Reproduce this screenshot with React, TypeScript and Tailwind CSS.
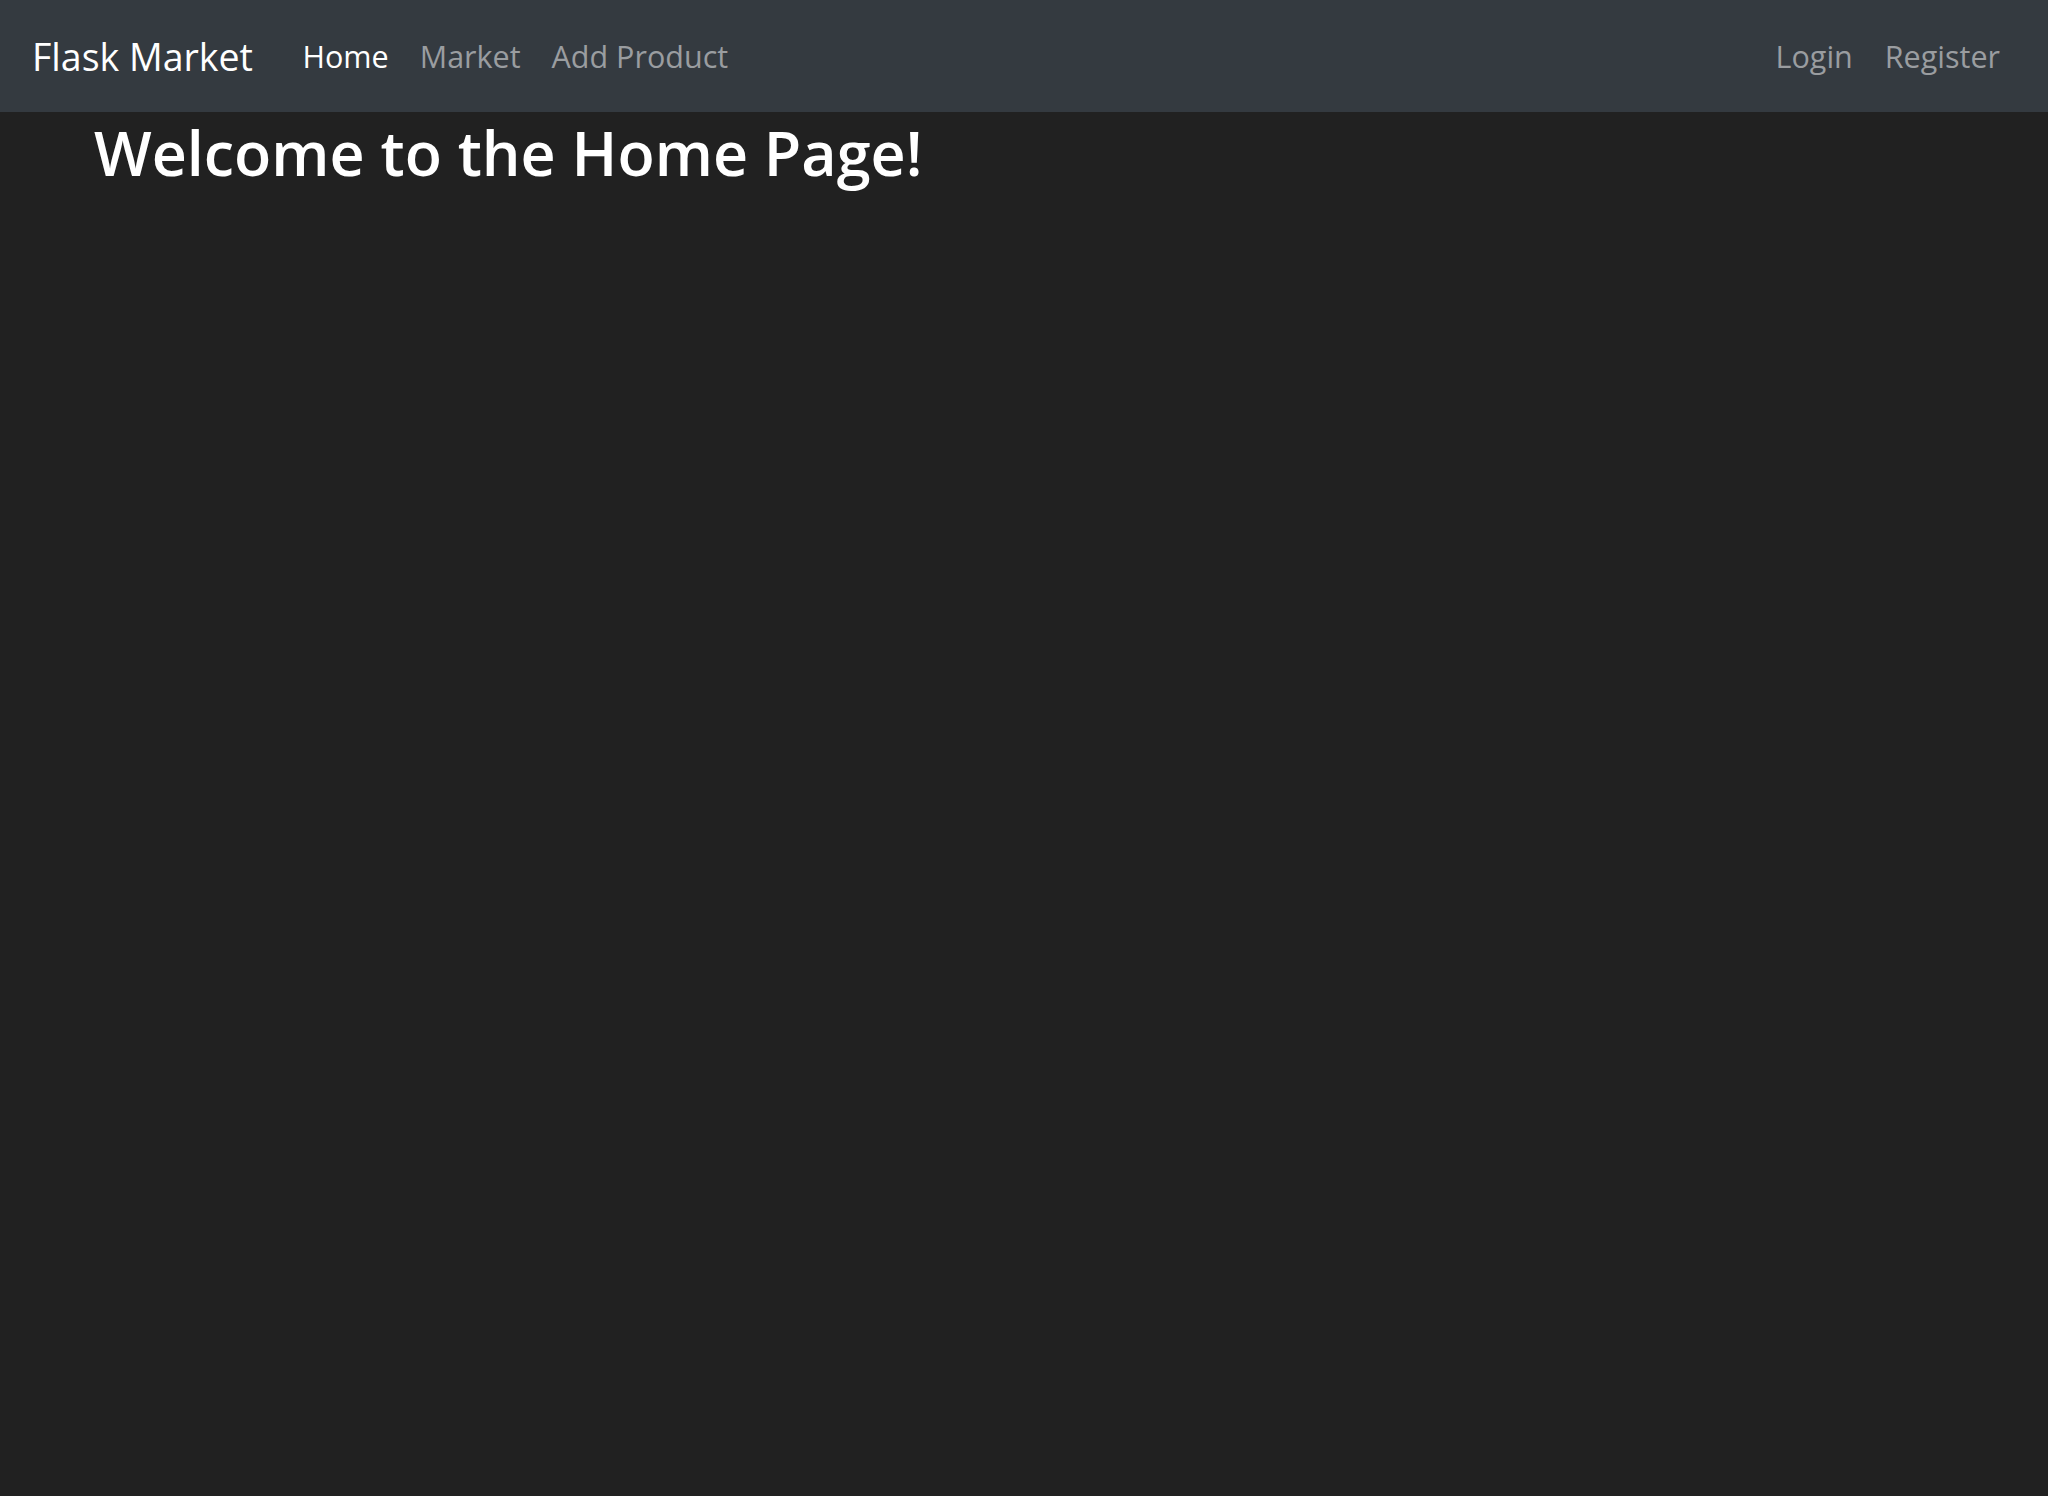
const navLinks = [
  { label: "Home", active: true },
  { label: "Market", active: false },
  { label: "Add Product", active: false },
];

const authLinks = ["Login", "Register"];

export default function App() {
  return (
    <div
      className="min-h-[1496px] w-full bg-[#212121] text-white"
      style={{ fontFamily: '"Open Sans", "Noto Sans", sans-serif' }}
    >
      {/* Navbar */}
      <nav className="flex h-[112px] items-center bg-[#343a40] px-[32px] pt-[2px]">
        <a className="mr-[34px] text-[37.5px] leading-none text-white">Flask Market</a>
        <ul className="flex items-center">
          {navLinks.map((link) => (
            <li key={link.label}>
              <a
                className={
                  "px-[15.5px] text-[30.5px] leading-none " +
                  (link.active ? "text-white" : "text-[#9a9da0]")
                }
              >
                {link.label}
              </a>
            </li>
          ))}
        </ul>
        <ul className="ml-auto flex items-center">
          {authLinks.map((label) => (
            <li key={label}>
              <a className="px-[16px] text-[30.5px] leading-none text-[#9a9da0]">{label}</a>
            </li>
          ))}
        </ul>
      </nav>

      {/* Page content */}
      <div className="px-[94px] pt-[4px]">
        <h1 className="text-[61px] font-semibold leading-[1.2] text-white">
          Welcome to the Home Page!
        </h1>
      </div>
    </div>
  );
}
